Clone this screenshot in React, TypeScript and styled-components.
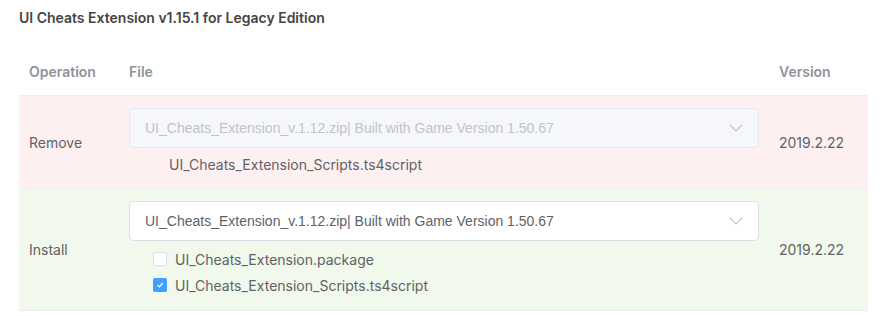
import React from "react";
import styled, { createGlobalStyle } from "styled-components";

const Global = createGlobalStyle`
  html, body { margin: 0; padding: 0; background: #fff; }
  body { font-family: Inter, "Noto Sans", sans-serif; -webkit-font-smoothing: antialiased; }
`;

const Page = styled.div`
  padding: 0 12px 0 19px;
  width: 849px;
`;

const Title = styled.div`
  height: 48px;
  box-sizing: border-box;
  padding-top: 8px;
  font-size: 14px;
  line-height: 20px;
  font-weight: 600;
  color: #454545;
`;

const Table = styled.div`
  display: grid;
  grid-template-columns: 100px 650px 99px;
  font-size: 14px;
  color: #606266;
`;

const HeadCell = styled.div`
  height: 48px;
  box-sizing: border-box;
  padding: 0 10px;
  display: flex;
  align-items: center;
  font-weight: 600;
  color: #909399;
  border-bottom: 1px solid #ebeef5;
`;

const Cell = styled.div<{ $tone: "danger" | "success" }>`
  background: ${(p) => (p.$tone === "danger" ? "#fef0f0" : "#f0f9eb")};
  border-bottom: 1px solid #ebeef5;
  padding: 12px 10px;
  display: flex;
  flex-direction: column;
  justify-content: center;
  line-height: 23px;
`;

const Select = styled.div<{ $disabled?: boolean }>`
  height: 40px;
  box-sizing: border-box;
  border: 1px solid ${(p) => (p.$disabled ? "#e4e7ed" : "#dcdfe6")};
  background: ${(p) => (p.$disabled ? "#f5f7fa" : "#fff")};
  color: ${(p) => (p.$disabled ? "#c0c4cc" : "#606266")};
  border-radius: 4px;
  display: flex;
  align-items: center;
  justify-content: space-between;
  padding: 0 15px;
  white-space: nowrap;
  font-family: "Liberation Sans", Arial, sans-serif;
`;

const Arrow = () => (
  <svg width="14" height="8" viewBox="0 0 14 8" aria-hidden>
    <path d="M1 1 L7 7 L13 1" fill="none" stroke="#c0c4cc" strokeWidth="1.2" />
  </svg>
);

const FileName = styled.div`
  margin-top: 5px;
  padding-left: 40px;
  color: #606266;
`;

const Checks = styled.div`
  display: flex;
  flex-direction: column;
  padding-left: 24px;
  margin-top: 5px;
`;

const CheckRow = styled.label`
  display: flex;
  align-items: center;
  gap: 8px;
  height: 26px;
  color: #606266;
`;

const Box = styled.span<{ $checked?: boolean }>`
  width: 14px;
  height: 14px;
  box-sizing: border-box;
  border-radius: 2px;
  border: 1px solid ${(p) => (p.$checked ? "#409eff" : "#dcdfe6")};
  background: ${(p) => (p.$checked ? "#409eff" : "#fff")};
  display: flex;
  align-items: center;
  justify-content: center;
`;

const Tick = () => (
  <svg width="10" height="10" viewBox="0 0 10 10" aria-hidden>
    <path d="M2.5 5 L4.3 6.8 L7.8 3" fill="none" stroke="#fff" strokeWidth="1.2" />
  </svg>
);

const selectText = "UI_Cheats_Extension_v.1.12.zip| Built with Game Version 1.50.67";

export default function App() {
  return (
    <>
      <Global />
      <Page>
        <Title>UI Cheats Extension v1.15.1 for Legacy Edition</Title>
        <Table>
          <HeadCell>Operation</HeadCell>
          <HeadCell>File</HeadCell>
          <HeadCell>Version</HeadCell>

          <Cell $tone="danger">Remove</Cell>
          <Cell $tone="danger">
            <Select $disabled>
              <span>{selectText}</span>
              <Arrow />
            </Select>
            <FileName>UI_Cheats_Extension_Scripts.ts4script</FileName>
          </Cell>
          <Cell $tone="danger">2019.2.22</Cell>

          <Cell $tone="success">Install</Cell>
          <Cell $tone="success">
            <Select>
              <span>{selectText}</span>
              <Arrow />
            </Select>
            <Checks>
              <CheckRow>
                <Box />
                UI_Cheats_Extension.package
              </CheckRow>
              <CheckRow>
                <Box $checked>
                  <Tick />
                </Box>
                UI_Cheats_Extension_Scripts.ts4script
              </CheckRow>
            </Checks>
          </Cell>
          <Cell $tone="success">2019.2.22</Cell>
        </Table>
      </Page>
    </>
  );
}
